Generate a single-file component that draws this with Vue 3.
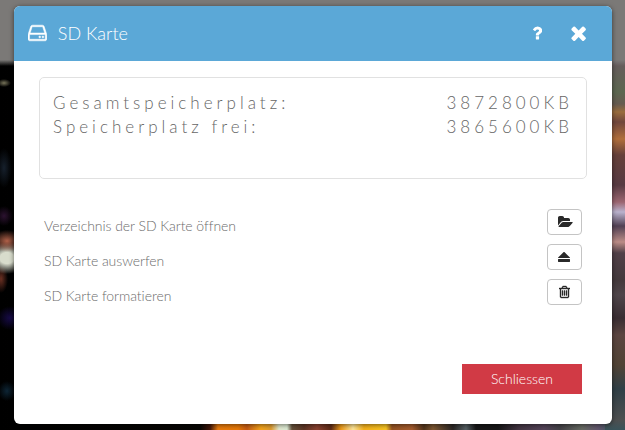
<script setup>
const storage = [
  { label: 'Gesamtspeicherplatz:', value: '3872800KB' },
  { label: 'Speicherplatz frei:', value: '3865600KB' },
]
const icons = {
  open: { w: 1920, d: 'M1879 952q0 31-31 66l-336 396q-43 51-120.500 86.500t-143.500 35.500h-1088q-34 0-60.500-13t-26.500-43q0-31 31-66l336-396q43-51 120.500-86.500t143.500-35.500h1088q34 0 60.500 13t26.500 43zm-343-344v160h-832q-94 0-197 47.500t-164 119.500l-337 396-5 6q0-4-.5-12.500t-.5-12.500v-960q0-92 66-158t158-66h320q92 0 158 66t66 158v32h544q92 0 158 66t66 158z' },
  eject: { w: 1540, d: 'M14 971l710-710q19-19 45-19t45 19l710 710q19 19 13 32t-32 13h-1472q-26 0-32-13t13-32zM1473 1536h-1408q-26 0-45-19t-19-45v-256q0-26 19-45t45-19h1408q26 0 45 19t19 45v256q0 26-19 45t-45 19z' },
  trash: { w: 1408, d: 'M512 736v576q0 14-9 23t-23 9h-64q-14 0-23-9t-9-23v-576q0-14 9-23t23-9h64q14 0 23 9t9 23zm256 0v576q0 14-9 23t-23 9h-64q-14 0-23-9t-9-23v-576q0-14 9-23t23-9h64q14 0 23 9t9 23zm256 0v576q0 14-9 23t-23 9h-64q-14 0-23-9t-9-23v-576q0-14 9-23t23-9h64q14 0 23 9t9 23zm128 724v-948h-896v948q0 22 7 40.500t14.500 27 10.500 8.500h832q3 0 10.500-8.500t14.500-27 7-40.500zm-672-1076h448l-48-117q-7-9-17-11h-317q-10 2-17 11zm928 32v64q0 14-9 23t-23 9h-96v948q0 83-47 143.500t-113 60.500h-832q-66 0-113-58.500t-47-141.500v-952h-96q-14 0-23-9t-9-23v-64q0-14 9-23t23-9h309l70-167q15-37 54-63t79-26h320q40 0 79 26t54 63l70 167h309q14 0 23 9t9 23z' },
}
const actions = [
  { label: 'Verzeichnis der SD Karte öffnen', name: 'open', icon: icons.open },
  { label: 'SD Karte auswerfen', name: 'eject', icon: icons.eject },
  { label: 'SD Karte formatieren', name: 'trash', icon: icons.trash },
]
</script>

<template>
  <div class="page">
    <section class="dialog">
      <header class="head">
        <svg class="disk" viewBox="0 0 1536 1792"><path d="M1040 1216q0 33-23.500 56.500t-56.500 23.500-56.500-23.500-23.500-56.500 23.500-56.500 56.500-23.500 56.500 23.500 23.500 56.500zm256 0q0 33-23.500 56.500t-56.500 23.500-56.500-23.500-23.500-56.500 23.500-56.500 56.500-23.500 56.500 23.500 23.500 56.500zm112 160v-320q0-13-9.500-22.500t-22.500-9.500h-1216q-13 0-22.500 9.500t-9.500 22.500v320q0 13 9.500 22.500t22.500 9.500h1216q13 0 22.500-9.500t9.500-22.500zm-1230-480h1180l-157-482q-4-13-16-21.500t-26-8.500h-782q-14 0-26 8.500t-16 21.500zm1358 160v320q0 66-47 113t-113 47h-1216q-66 0-113-47t-47-113v-320q0-25 16-75l197-606q17-53 63-86t101-33h782q55 0 101 33t63 86l197 606q16 50 16 75z" /></svg>
        <h1>SD Karte</h1>
        <svg class="help" viewBox="0 0 1024 1792"><path d="M704 1256v240q0 16-12 28t-28 12h-240q-16 0-28-12t-12-28v-240q0-16 12-28t28-12h240q16 0 28 12t12 28zm316-600q0 54-15.500 101t-35 76.500-55 59.500-57.500 43.500-61 35.500q-41 23-68.500 65t-27.500 67q0 17-12 32.500t-28 15.500h-240q-15 0-25.500-18.500t-10.500-37.500v-45q0-83 65-156.500t143-108.500q59-27 84-56t25-76q0-42-46.500-74t-107.500-32q-65 0-108 29-35 25-107 115-13 16-31 16-12 0-25-8l-164-125q-13-10-15.500-25t5.500-28q160-266 464-266 80 0 161 31t146 83 106 127.500 41 158.500z" /></svg>
        <svg class="close" viewBox="0 0 1408 1792"><path d="M1298 1322q0 40-28 68l-136 136q-28 28-68 28t-68-28l-294-294-294 294q-28 28-68 28t-68-28l-136-136q-28-28-28-68t28-68l294-294-294-294q-28-28-28-68t28-68l136-136q28-28 68-28t68 28l294 294 294-294q28-28 68-28t68 28l136 136q28 28 28 68t-28 68l-294 294 294 294q28 28 28 68z" /></svg>
      </header>

      <dl class="storage">
        <div v-for="s in storage" :key="s.label" class="stat">
          <dt>{{ s.label }}</dt>
          <dd>{{ s.value }}</dd>
        </div>
      </dl>

      <ul class="actions">
        <li v-for="a in actions" :key="a.label">
          <span>{{ a.label }}</span>
          <button type="button" :class="a.name" :aria-label="a.label">
            <svg :viewBox="`0 0 ${a.icon.w} 1792`"><path :d="a.icon.d" /></svg>
          </button>
        </li>
      </ul>

      <footer class="foot">
        <button type="button" class="dismiss">Schliessen</button>
      </footer>
    </section>
  </div>
</template>

<style>
body {
  margin: 0;
}
</style>

<style scoped>
.page {
  box-sizing: border-box;
  width: 625px;
  height: 430px;
  padding: 6px 13px 6px 14px;
  overflow: hidden;
  font-family: Lato, "Liberation Sans", sans-serif;
  background:
    linear-gradient(#7b7977 0, #7b7977 60px, transparent 66px),
    radial-gradient(ellipse 7px 4px at 4px 83px, #77745a, transparent),
    radial-gradient(ellipse 8px 20px at 4px 168px, #16202c, transparent),
    radial-gradient(ellipse 9px 10px at 4px 216px, #2c1230, transparent),
    radial-gradient(ellipse 16px 11px at 7px 241px, #b06149, transparent),
    radial-gradient(ellipse 20px 16px at 7px 258px, #d8dccc 35%, transparent),
    radial-gradient(ellipse 7px 14px at 1px 279px, #6b3022, transparent),
    radial-gradient(ellipse 13px 12px at 10px 318px, #170b48, transparent),
    radial-gradient(ellipse 9px 10px at 7px 391px, #0d2535, transparent),
    linear-gradient(#685b5e 60px, #5c6750 92px, #665b50 104px, #996c3c 112px, #70463c 122px, #b06e3b 139px, #65403a 155px, #573a42 185px, #9b6570 202px, #b9b2cd 212px, #514053 226px, #bb8c86 242px, #514048 253px, #44393c 280px, #4f454a 295px, #392d32 318px, #5b4540 335px, #514335 365px, #304047 389px, #4d4f50 420px, #39535a 430px) right / 20px 100% no-repeat,
    linear-gradient(90deg, #000 0, #080604 200px, #421609 210px, #e87a0c 218px, #e77907 238px, #c65b13 247px, #f5a51b 261px, #df9c2f 271px, #e2ead0 279px, #ddecd5 287px, #64503a 292px, #5d3524 304px, #8b4231 317px, #5d2a16 331px, #ee9b19 341px, #ffe79b 353px, #f5b11b 364px, #f8c523 386px, #965423 392px, #a65c2e 412px, #51341b 424px, #7d5731 433px, #2b2725 453px, #566064 466px, #171717 476px, #171617 498px, #443643 519px, #554459 544px, #444247 560px, #676b63 582px, #62566d 598px, #36585e 615px, #39535a 625px);
}
.dialog {
  display: flex;
  flex-direction: column;
  height: 418px;
  background: #fff;
  border-radius: 6px;
  box-shadow: 0 1px 5px rgba(0, 0, 0, 0.55);
  overflow: hidden;
}
.head {
  box-sizing: border-box;
  display: flex;
  align-items: center;
  height: 55px;
  padding: 0 25px 0 14px;
  background: #5ba8d7;
  color: #fff;
}
svg {
  display: block;
  fill: currentColor;
}
.disk {
  height: 22px;
  stroke: currentColor;
  stroke-width: 40;
  margin-top: -1px;
}
h1 {
  flex: 1;
  margin: -2px 0 0 11px;
  font-size: 18px;
  font-weight: 300;
  line-height: 24px;
}
.help {
  height: 18px;
  margin-top: -1px;
  margin-right: 28px;
}
.close {
  height: 22px;
  margin-top: -1px;
  margin-right: -0.5px;
}
.storage {
  box-sizing: border-box;
  height: 102px;
  margin: 16px 25px 0;
  padding: 13px 13px 0;
  border: 1px solid #e1e1e1;
  border-radius: 5px;
}
.stat {
  display: flex;
  justify-content: space-between;
  font-size: 17px;
  font-weight: 300;
  line-height: 24px;
  letter-spacing: 4px;
  color: #666;
}
dd {
  margin: 0;
}
.actions {
  display: grid;
  gap: 9px;
  margin: 30px 30px 0;
  padding: 0;
  list-style: none;
  font-size: 14px;
  font-weight: 300;
  letter-spacing: -0.05px;
  color: #6c6c6c;
}
.actions li {
  display: flex;
  justify-content: space-between;
  height: 26px;
}
.actions span {
  padding-top: 8px;
  line-height: 18px;
}
.actions button {
  box-sizing: border-box;
  display: flex;
  align-items: center;
  justify-content: center;
  width: 35px;
  height: 26px;
  padding: 0;
  border: 1px solid #c4c4c4;
  border-radius: 4px;
  background: #fff;
  color: #292929;
}
.actions svg {
  height: 14px;
}
.actions .open {
  padding-left: 2px;
}
.trash svg {
  stroke: currentColor;
  stroke-width: 50;
}
.foot {
  display: flex;
  justify-content: flex-end;
  margin: auto 30px 30px;
}
.dismiss {
  width: 120px;
  height: 30px;
  padding: 0;
  border: 0;
  background: #d13a45;
  color: #fff;
  font: 300 14px/30px Lato, "Liberation Sans", sans-serif;
}
</style>
